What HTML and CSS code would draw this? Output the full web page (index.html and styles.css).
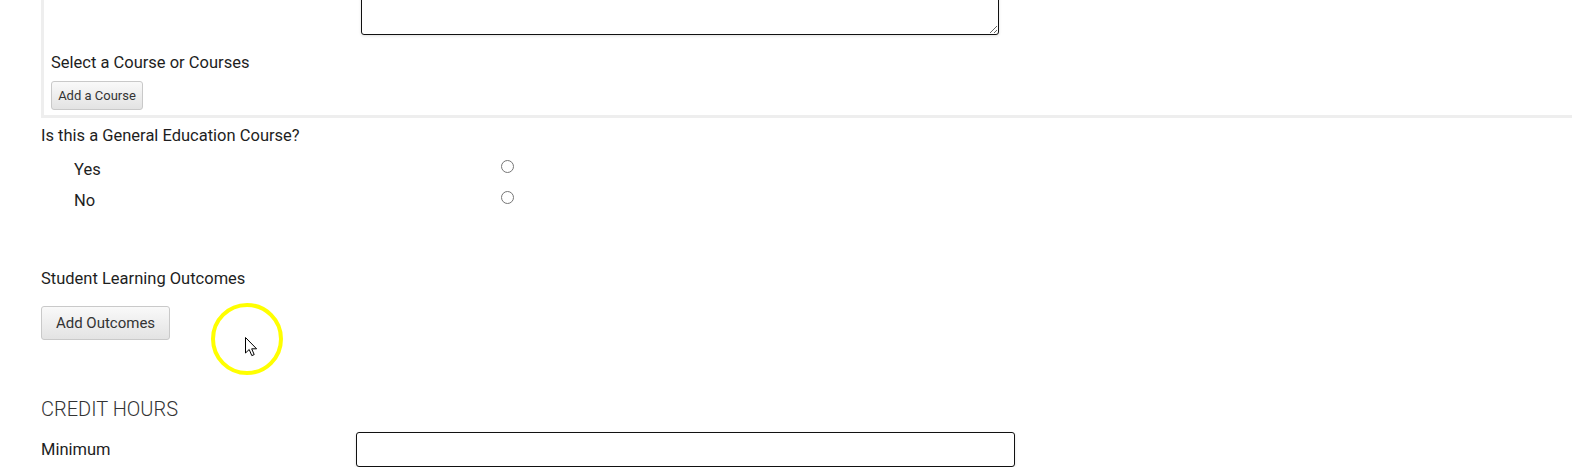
FILE: index.html
```html
<!DOCTYPE html>
<html lang="en">

<head>
    <title>Course Proposal</title>
    <meta charset="utf-8">
    <meta name="viewport" content="width=device-width, initial-scale=1.0">
    <link rel="stylesheet" href="styles.css">
</head>

<body>

    <main class="form">

        <section class="kursus">
            <textarea class="beskrivelse"></textarea>
            <p class="felt">Select a Course or Courses</p>
            <button class="knap lille">Add a Course</button>
        </section>

        <p class="sporg">Is this a General Education Course?</p>
        <div class="valg">
            <label class="valg-tekst" for="gen-ja">Yes</label>
            <input type="radio" name="gened" id="gen-ja">
        </div>
        <div class="valg">
            <label class="valg-tekst" for="gen-nej">No</label>
            <input type="radio" name="gened" id="gen-nej">
        </div>

        <p class="sporg slo">Student Learning Outcomes</p>
        <button class="knap stor">Add Outcomes</button>

        <h2 class="overskrift">CREDIT HOURS</h2>
        <div class="raekke">
            <label class="raekke-tekst" for="min">Minimum</label>
            <input type="text" class="felt-input" id="min">
        </div>

    </main>

    <div class="klik"></div>
    <svg class="mus" width="13" height="20" viewBox="0 0 13 20">
        <path d="M0.5 0.5 L0.5 16 L4.2 12.5 L6.8 18.6 L9.2 17.6 L6.7 11.8 L11.6 11.8 Z" fill="#fff" stroke="#000" stroke-width="1" stroke-linejoin="round"/>
    </svg>

</body>

</html>
```

FILE: styles.css
```css
body {
    margin: 0;
    background-color: #ffffff;
    font-family: Roboto, "Liberation Sans", sans-serif;
    font-size: 16.5px;
    color: #1e1e1e;
}

.form {
    padding-left: 41px;
}

.kursus {
    border-left: 3px solid #eeeeee;
    border-bottom: 3px solid #eeeeee;
    padding: 0 0 5px 7px;
    margin-top: -45px;
}

.beskrivelse {
    display: block;
    box-sizing: border-box;
    width: 638px;
    height: 80px;
    margin: 0 0 0 310px;
    border: 1px solid #111;
    border-radius: 3px;
    box-shadow: 0 1px 3px rgba(0, 0, 0, 0.12);
    resize: vertical;
}

.felt {
    margin: 19px 0 0 0;
    line-height: 18px;
}

.knap {
    display: block;
    box-sizing: border-box;
    font-family: Roboto, "Liberation Sans", sans-serif;
    color: #333;
    background: linear-gradient(#f9f9f9, #e3e3e3);
    border: 1px solid #c9c9c9;
    border-radius: 3px;
    cursor: pointer;
}

.lille {
    margin-top: 9px;
    height: 29px;
    width: 92px;
    font-size: 13px;
    padding: 0;
}

.stor {
    margin-top: 18px;
    height: 34px;
    width: 129px;
    font-size: 15px;
    padding: 0;
}

.sporg {
    margin: 9px 0 0 0;
    line-height: 18px;
}

.valg {
    display: flex;
    align-items: center;
    height: 31px;
}

.valg:first-of-type {
    margin-top: 7px;
}

.valg-tekst {
    width: 422px;
    padding-left: 33px;
    margin-top: 3px;
}

.valg input {
    width: 13px;
    height: 13px;
    margin: 0 0 0 5px;
    position: relative;
    top: -1px;
}

.slo {
    margin-top: 56px;
}

.overskrift {
    margin: 58px 0 0 0;
    font-size: 20px;
    font-weight: 300;
    line-height: 22px;
    color: #333;
}

.raekke {
    display: flex;
    align-items: center;
    margin-top: 12px;
}

.raekke-tekst {
    width: 315px;
}

.felt-input {
    box-sizing: border-box;
    width: 659px;
    height: 35px;
    border: 1px solid #111;
    border-radius: 3px;
    box-shadow: 0 1px 3px rgba(0, 0, 0, 0.12);
}

/* klik-markering fra skaermoptagelsen */
.klik {
    position: absolute;
    left: 211px;
    top: 303px;
    width: 64px;
    height: 64px;
    border: 4px solid #ffff00;
    border-radius: 50%;
}

.mus {
    position: absolute;
    left: 245px;
    top: 337px;
}
```
